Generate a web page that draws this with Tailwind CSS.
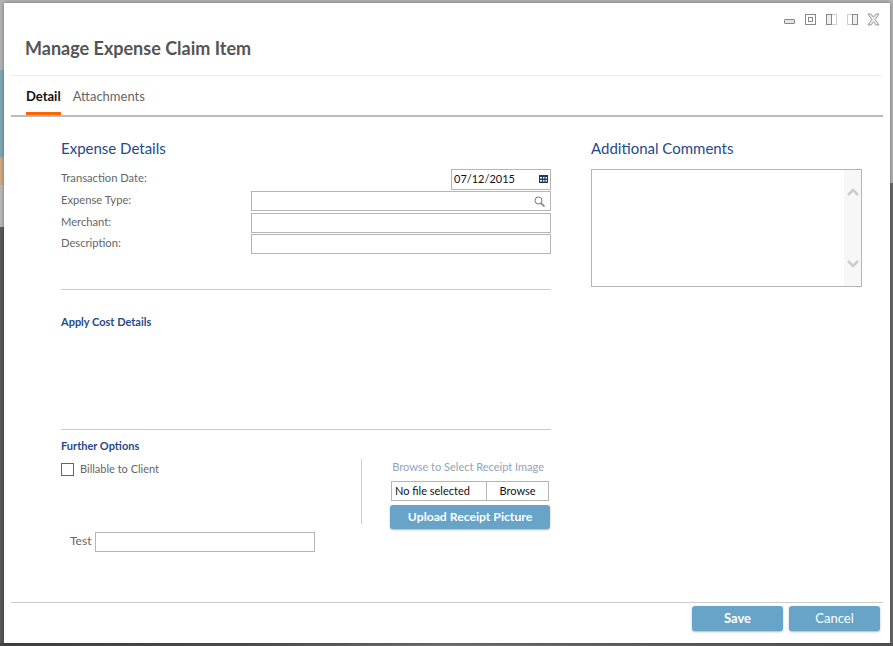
<!DOCTYPE html>
<html lang="en">
<head>
    <meta charset="UTF-8">
    <meta name="viewport" content="width=device-width, initial-scale=1.0">
    <title>Manage Expense Claim Item</title>
    <script src="https://cdn.jsdelivr.net/npm/@tailwindcss/browser@4"></script>
</head>
<body class="relative h-[646px] w-[893px] overflow-hidden bg-[#6a6a6a] font-['Lato',sans-serif]">
    <!-- Page behind the dialog -->
    <div class="absolute inset-x-0 top-0 h-[70px] bg-[#b4b4b4]"></div>
    <div class="absolute left-0 top-[70px] h-[87px] w-1 bg-[#7fa9b5]"></div>
    <div class="absolute left-0 top-[157px] h-[28px] w-1 bg-[#cfa983]"></div>
    <div class="absolute left-0 top-[185px] h-[42px] w-1 bg-[#b9b9b9]"></div>
    <div class="absolute left-0 top-[227px] bottom-0 w-1 bg-[#5a5a5a]"></div>
    <div class="absolute right-0 top-[70px] h-[113px] w-1 bg-[#b4b4b4]"></div>
    <div class="absolute inset-x-0 bottom-0 h-[3px] bg-[linear-gradient(90deg,#444_0%,#555_30%,#777_50%,#666_70%,#555_100%)]"></div>

    <!-- Dialog -->
    <div class="absolute left-1 top-[3px] flex h-[640px] w-[886px] flex-col bg-white shadow-[0_0_4px_rgba(0,0,0,0.4)]">
        <!-- Window controls -->
        <div class="flex h-[25px] items-start justify-end gap-[10px] pr-[10px] pt-[11px]">
            <svg class="mt-[5px] h-[5px] w-[11px]" viewBox="0 0 11 5"><rect x=".5" y=".5" width="10" height="4" rx=".5" fill="#e4e4e4" stroke="#888"/></svg>
            <svg class="h-[11px] w-[11px]" viewBox="0 0 11 11" fill="none"><rect x=".5" y=".5" width="10" height="10" stroke="#888"/><rect x="3.500" y="3.500" width="4" height="4" stroke="#888"/></svg>
            <svg class="h-[11px] w-[11px]" viewBox="0 0 11 11" fill="none"><rect x=".5" y=".5" width="10" height="10" stroke="#ccc"/><rect x=".5" y=".5" width="5" height="10" fill="#eee" stroke="#888"/></svg>
            <svg class="h-[11px] w-[11px]" viewBox="0 0 11 11" fill="none"><rect x=".5" y=".5" width="10" height="10" stroke="#ccc"/><rect x="5.500" y=".5" width="5" height="10" fill="#eee" stroke="#888"/></svg>
            <svg class="-ml-[1px] -mt-[1px] h-[13px] w-[13px]" viewBox="0 0 13 13"><path d="M1 1h3l2.500 3.200L9 1h3L8.200 6.500 12 12H9L6.500 8.800 4 12H1l3.800-5.500z" fill="#eee" stroke="#999"/></svg>
        </div>

        <h1 class="ml-[21px] text-[18px] leading-[40px] font-bold text-[#555]">Manage Expense Claim Item</h1>

        <!-- Tabs -->
        <div class="ml-[7px] mr-[7px] mt-[7px] flex h-[42px] gap-3 border-t border-[#eee] border-b-2 border-b-[#bbb] pl-[15px] text-[13px]">
            <span class="h-[39px] border-b-[3px] border-[#f60] pt-[11px] font-bold text-[#111]">Detail</span>
            <span class="pt-[11px] text-[#666]">Attachments</span>
        </div>

        <div class="flex flex-1">
            <!-- Left column -->
            <div class="ml-[57px] w-[490px]">
                <h2 class="mt-[21px] text-[15px] leading-5 text-[#1f4a8c]">Expense Details</h2>
                <div class="mt-[11px] grid grid-cols-[190px_300px] gap-y-[1px] text-[11.2px] leading-[18px] text-[#666]">
                    <span>Transaction Date:</span>
                    <div class="flex h-[21px] w-[100px] items-center justify-between justify-self-end border border-[#b5b5b5] px-[2px] pb-[1px] text-[11px] text-[#111]">
                        07/12/2015
                        <svg class="h-[8px] w-[9px]" viewBox="0 0 9 8"><rect width="9" height="8" fill="#1f3a5f"/><path d="M1 2h2v1.500H1zM4 2h1.500v1.500H4zM6.500 2H8v1.500H6.500zM1 5h2v1.500H1zM4 5h1.500v1.500H4zM6.500 5H8v1.500H6.500z" fill="#fff"/></svg>
                    </div>
                    <span>Expense Type:</span>
                    <div class="flex h-[20px] items-center justify-end border border-[#b5b5b5] pr-[5px]">
                        <svg class="h-[11px] w-[11px]" viewBox="0 0 11 11" fill="none" stroke="#777"><circle cx="4.500" cy="4.500" r="3.500"/><path d="M7 7l3.500 3.500" stroke-width="1.500"/></svg>
                    </div>
                    <span class="mt-[1px]">Merchant:</span>
                    <div class="mt-[1px] h-[20px] border border-[#b5b5b5]"></div>
                    <span>Description:</span>
                    <div class="h-[20px] border border-[#b5b5b5]"></div>
                </div>

                <div class="mt-[35px] border-t border-[#ccc]"></div>
                <h3 class="mt-[25px] text-[11px] leading-[14px] font-bold text-[#1f4a8c]">Apply Cost Details</h3>

                <div class="mt-[100px] border-t border-[#ccc]"></div>
                <h3 class="mt-[9px] text-[11px] leading-[14px] font-bold text-[#1f4a8c]">Further Options</h3>

                <div class="flex">
                    <div class="w-[300px]">
                        <label class="mt-[9px] flex items-center gap-[6px] text-[11px] leading-[14px] text-[#666]">
                            <span class="h-[13px] w-[13px] border border-[#666]"></span>
                            Billable to Client
                        </label>
                        <div class="mt-[56px] ml-[9px] flex items-center gap-[4px] text-[12px] text-[#666]">
                            <span class="pb-[2px]">Test</span>
                            <div class="h-[20px] w-[220px] border border-[#b5b5b5]"></div>
                        </div>
                    </div>
                    <div class="mt-[6px] flex h-[65px] w-[190px] flex-col items-end border-l border-[#ccc]">
                        <p class="mr-[7px] mt-[1px] shrink-0 text-[11px] leading-[14px] text-[#8fa3bd]">Browse to Select Receipt Image</p>
                        <div class="mr-[2px] mt-[7px] flex h-[20px] w-[158px] shrink-0 border border-[#b5b5b5] text-[11px] leading-[18px] text-[#111]">
                            <span class="w-[95px] border-r border-[#b5b5b5] pl-[3px]">No file selected</span>
                            <span class="flex-1 text-center">Browse</span>
                        </div>
                        <button class="mr-[1px] mt-[4px] h-[24px] w-[160px] shrink-0 rounded-[3px] bg-[#68a3c8] text-[12.2px] font-bold text-white shadow-[0_1px_2px_rgba(0,0,0,0.3)]">Upload Receipt Picture</button>
                    </div>
                </div>
            </div>

            <!-- Right column -->
            <div class="ml-[40px] w-[271px]">
                <h2 class="mt-[21px] text-[15px] leading-5 text-[#1f4a8c]">Additional Comments</h2>
                <div class="mt-[11px] flex h-[118px] justify-end border border-[#b5b5b5]">
                    <div class="flex w-[17px] flex-col items-center justify-between bg-[#f7f7f7] py-[18px]">
                        <svg class="h-[8px] w-[12px]" viewBox="0 0 12 8" fill="none" stroke="#ccc" stroke-width="2.500"><path d="M1 7l5-5 5 5"/></svg>
                        <svg class="h-[8px] w-[12px]" viewBox="0 0 12 8" fill="none" stroke="#ccc" stroke-width="2.500"><path d="M1 1l5 5 5-5"/></svg>
                    </div>
                </div>
            </div>
        </div>

        <!-- Footer -->
        <div class="mx-[7px] flex h-[41px] justify-end gap-[6px] border-t border-[#ccc] pr-[3px] pt-[3px]">
            <button class="h-[25px] w-[91px] rounded-[3px] bg-[#68a3c8] text-[13px] font-bold text-white shadow-[0_1px_2px_rgba(0,0,0,0.3)]">Save</button>
            <button class="h-[25px] w-[91px] rounded-[3px] bg-[#68a3c8] text-[13px] text-white shadow-[0_1px_2px_rgba(0,0,0,0.3)]">Cancel</button>
        </div>
    </div>
</body>
</html>
